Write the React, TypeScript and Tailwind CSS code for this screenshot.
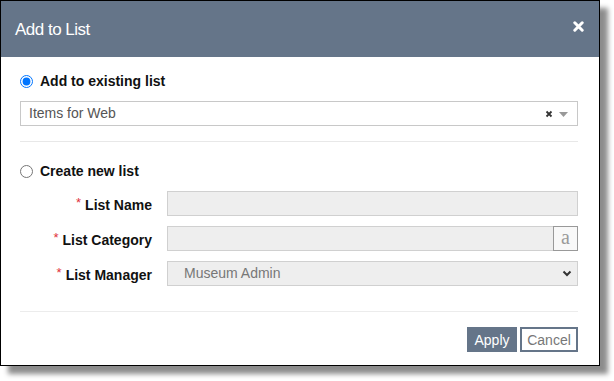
import React, { useState } from "react";

const font = { fontFamily: '"Liberation Sans", Arial, sans-serif' };

const Label: React.FC<{ text: string }> = ({ text }) => (
  <div className="w-[132px] shrink-0 pt-[3px] text-right text-[14px] font-bold text-[#111] leading-none">
    <span className="text-[#e0313b] text-[13px] font-normal relative -top-[3px] mr-[4px]">*</span>
    {text}
  </div>
);

export default function App() {
  const [mode, setMode] = useState<"existing" | "new">("existing");

  return (
    <div className="w-[614px] h-[381px] bg-white" style={font}>
      <div className="w-[600px] h-[366px] border border-black bg-white shadow-[8px_8px_5px_rgba(0,0,0,0.45)] flex flex-col">
        {/* header */}
        <div className="h-[56px] shrink-0 bg-[#657589] flex items-center justify-between pl-[14px] pr-[15px]">
          <span className="text-white text-[17px] leading-none tracking-[-0.5px]">Add to List</span>
          <svg width="11" height="11" viewBox="0 0 11 11" className="mt-[-6px]">
            <path d="M1.8 1.8 L9.2 9.2 M9.2 1.8 L1.8 9.2" stroke="white" strokeWidth="3" strokeLinecap="round" />
          </svg>
        </div>

        {/* body */}
        <div className="flex-1 flex flex-col pl-[19px] pr-[21px]">
          <label className="mt-[14px] h-[20px] flex items-center gap-[7px] cursor-pointer">
            <input
              type="radio"
              name="mode"
              checked={mode === "existing"}
              onChange={() => setMode("existing")}
              className="m-0 w-[13px] h-[13px]"
            />
            <span className="text-[14px] font-bold text-[#111]">Add to existing list</span>
          </label>

          <div className="mt-[10px] h-[25px] border border-[#c8c8c8] flex items-center pl-[8px] pr-[9px]">
            <span className="flex-1 text-[14px] text-[#555]">Items for Web</span>
            <svg width="8" height="8" viewBox="0 0 8 8" className="mr-[6px]">
              <path d="M1.5 1.5 L6.5 6.5 M6.5 1.5 L1.5 6.5" stroke="#333" strokeWidth="1.8" />
            </svg>
            <svg width="9" height="5" viewBox="0 0 9 5" className="mt-[2px]">
              <path d="M0 0 L9 0 L4.5 5 Z" fill="#999" />
            </svg>
          </div>

          <div className="mt-[15px] h-px bg-[#e8e8e8]" />

          <label className="mt-[19px] h-[20px] flex items-center gap-[7px] cursor-pointer">
            <input
              type="radio"
              name="mode"
              checked={mode === "new"}
              onChange={() => setMode("new")}
              className="m-0 w-[13px] h-[13px]"
            />
            <span className="text-[14px] font-bold text-[#111]">Create new list</span>
          </label>

          <div className="mt-[10px] flex flex-col gap-[10px]">
            <div className="flex items-center gap-[15px]">
              <Label text="List Name" />
              <div className="flex-1 h-[25px] bg-[#eeeeee] border border-[#d0d0d0]" />
            </div>
            <div className="flex items-center gap-[15px]">
              <Label text="List Category" />
              <div className="flex-1 h-[25px] flex">
                <div className="flex-1 bg-[#eeeeee] border border-[#d0d0d0] border-r-0" />
                <div className="w-[25px] border border-[#999] bg-[#f8f8f8] flex items-center justify-center text-[20px] text-[#9a9a9a] leading-none pb-[3px]" style={{ fontFamily: '"Liberation Serif", serif' }}>
                  a
                </div>
              </div>
            </div>
            <div className="flex items-center gap-[15px]">
              <Label text="List Manager" />
              <div className="flex-1 h-[25px] bg-[#eeeeee] border border-[#d0d0d0] flex items-center pl-[16px] pr-[5px]">
                <span className="flex-1 text-[14px] text-[#777]">Museum Admin</span>
                <svg width="10" height="7" viewBox="0 0 10 7">
                  <path d="M1.5 1.5 L5 5 L8.5 1.5" stroke="#333" strokeWidth="2" fill="none" />
                </svg>
              </div>
            </div>
          </div>

          <div className="mt-[25px] h-px bg-[#ececec]" />

          <div className="mt-[15px] flex justify-end gap-[3px]">
            <button className="w-[50px] h-[25px] bg-[#657589] text-white text-[14px] leading-none">Apply</button>
            <button className="w-[58px] h-[25px] bg-white border-2 border-[#657589] text-[#777] text-[14px] leading-none">Cancel</button>
          </div>
        </div>
      </div>
    </div>
  );
}
